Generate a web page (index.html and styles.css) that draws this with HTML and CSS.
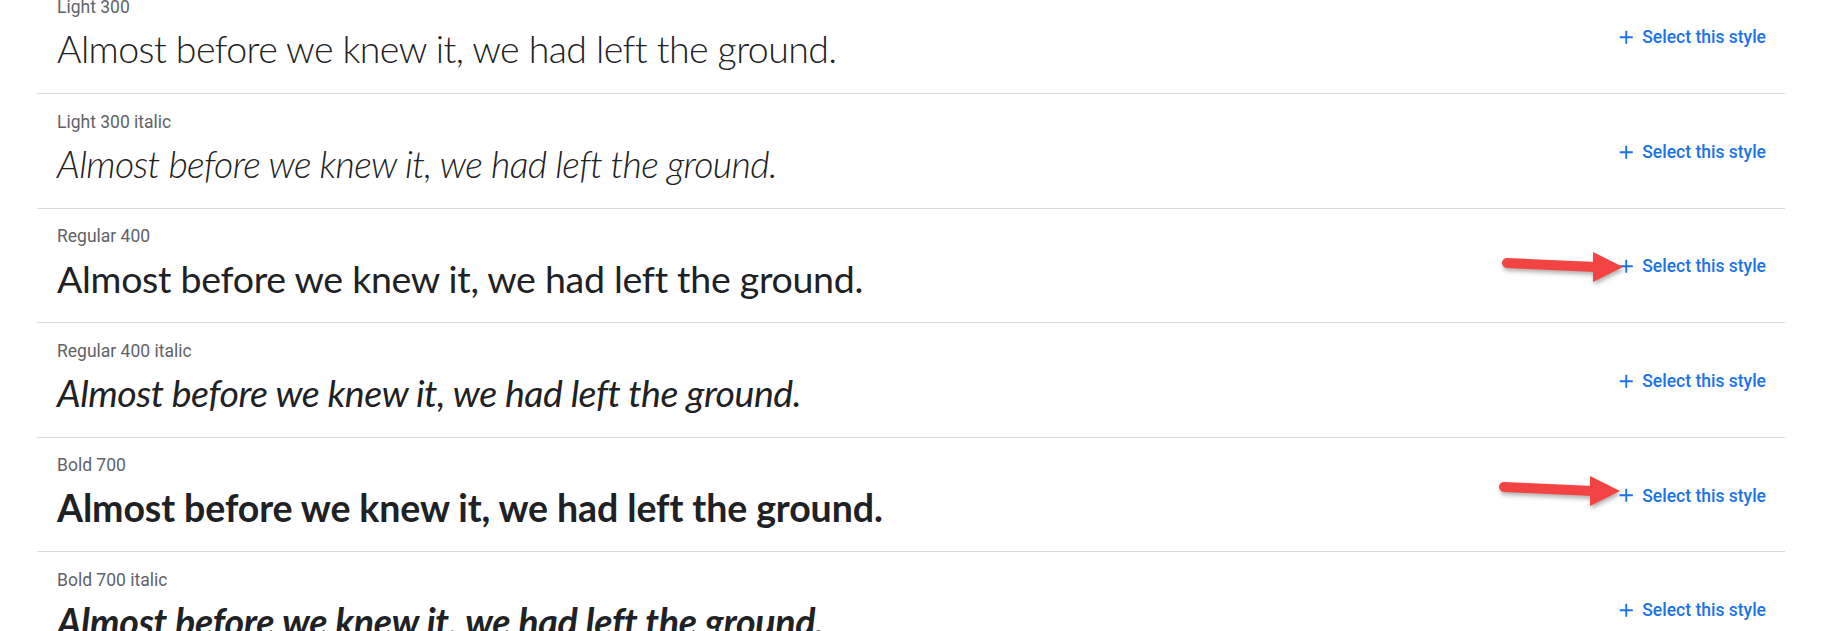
FILE: index.html
```html
<!doctype html>
<html lang="en">
	<head>
		<meta charset="UTF-8" />
		<meta name="viewport" content="width=device-width, initial-scale=1.0" />
		<title>Lato - Styles</title>
		<link rel="stylesheet" href="styles.css">
	</head>
	<body>
		<div class="style-list">
			<div class="style-row">
				<div class="style-info">
					<div class="style-name">Light 300</div>
					<div class="sample w300">Almost before we knew it, we had left the ground.</div>
				</div>
				<button class="select-btn">
					<svg class="plus" viewBox="0 0 24 24"><path d="M19 13h-6v6h-2v-6H5v-2h6V5h2v6h6v2z" /></svg>
					<span>Select this style</span>
				</button>
			</div>

			<div class="style-row">
				<div class="style-info">
					<div class="style-name">Light 300 italic</div>
					<div class="sample w300 italic">Almost before we knew it, we had left the ground.</div>
				</div>
				<button class="select-btn">
					<svg class="plus" viewBox="0 0 24 24"><path d="M19 13h-6v6h-2v-6H5v-2h6V5h2v6h6v2z" /></svg>
					<span>Select this style</span>
				</button>
			</div>

			<div class="style-row">
				<div class="style-info">
					<div class="style-name">Regular 400</div>
					<div class="sample w400">Almost before we knew it, we had left the ground.</div>
				</div>
				<button class="select-btn">
					<svg class="plus" viewBox="0 0 24 24"><path d="M19 13h-6v6h-2v-6H5v-2h6V5h2v6h6v2z" /></svg>
					<span>Select this style</span>
				</button>
				<!-- annotation arrow -->
				<svg class="callout callout-first" viewBox="0 0 135 40">
					<line x1="12" y1="15" x2="101" y2="19" />
					<polygon points="98,4 128,19 98,34" />
				</svg>
			</div>

			<div class="style-row">
				<div class="style-info">
					<div class="style-name">Regular 400 italic</div>
					<div class="sample w400 italic">Almost before we knew it, we had left the ground.</div>
				</div>
				<button class="select-btn">
					<svg class="plus" viewBox="0 0 24 24"><path d="M19 13h-6v6h-2v-6H5v-2h6V5h2v6h6v2z" /></svg>
					<span>Select this style</span>
				</button>
			</div>

			<div class="style-row">
				<div class="style-info">
					<div class="style-name">Bold 700</div>
					<div class="sample w700">Almost before we knew it, we had left the ground.</div>
				</div>
				<button class="select-btn">
					<svg class="plus" viewBox="0 0 24 24"><path d="M19 13h-6v6h-2v-6H5v-2h6V5h2v6h6v2z" /></svg>
					<span>Select this style</span>
				</button>
				<svg class="callout callout-second" viewBox="0 0 135 40">
					<line x1="12" y1="15" x2="101" y2="19" />
					<polygon points="98,4 128,19 98,34" />
				</svg>
			</div>

			<div class="style-row">
				<div class="style-info">
					<div class="style-name">Bold 700 italic</div>
					<div class="sample w700 italic">Almost before we knew it, we had left the ground.</div>
				</div>
				<button class="select-btn">
					<svg class="plus" viewBox="0 0 24 24"><path d="M19 13h-6v6h-2v-6H5v-2h6V5h2v6h6v2z" /></svg>
					<span>Select this style</span>
				</button>
			</div>
		</div>
	</body>
</html>
```

FILE: styles.css
```css
:root {
	--primary-color: #1a73e8;
	--text-color: #202124;
	--text-secondary: #5f6368;
	--border-color: #dadce0;
	--arrow-color: #f44343;
}

body {
	margin: 0;
	background-color: #fff;
	overflow: hidden;
	font-family: Roboto, 'Liberation Sans', Arial, sans-serif;
}

/* list is scrolled a little: first row starts above the viewport */
.style-list {
	margin: -20.6px 39px 0 37px;
}

.style-row {
	position: relative;
	display: flex;
	align-items: center;
	justify-content: space-between;
	padding: 15.5px 19px 21.6px 20px;
	border-bottom: 1px solid var(--border-color);
}

.style-info {
	min-width: 0;
}

.style-name {
	font-size: 17.5px;
	line-height: 25px;
	color: var(--text-secondary);
	margin-bottom: 6.5px;
}

.sample {
	font-family: Lato, 'Liberation Sans', sans-serif;
	font-size: 37.5px;
	line-height: 45px;
	color: var(--text-color);
	white-space: nowrap;
}

/* the local Lato runs a bit wider than the one on the page */
.w300 {
	font-weight: 300;
	letter-spacing: -0.57px;
}

.w300.italic {
	letter-spacing: -0.67px;
}

.w400 {
	font-weight: 400;
	letter-spacing: -0.29px;
}

.w400.italic {
	letter-spacing: -0.48px;
}

.w700 {
	font-weight: 700;
	letter-spacing: -0.1px;
}

.w700.italic {
	letter-spacing: -0.26px;
}

.italic {
	font-style: italic;
}

.select-btn {
	display: flex;
	align-items: center;
	gap: 5px;
	padding: 0;
	margin-top: 8px;
	border: none;
	background: none;
	font-family: Roboto, 'Liberation Sans', Arial, sans-serif;
	font-size: 17.5px;
	font-weight: 500;
	color: var(--primary-color);
	cursor: pointer;
}

.plus {
	width: 22.5px;
	height: 22.5px;
	fill: var(--primary-color);
}

/* red arrows drawn over the page */
.callout {
	position: absolute;
	width: 135px;
	height: 40px;
	filter: drop-shadow(1px 3px 2px rgba(0, 0, 0, 0.3));
}

.callout line {
	stroke: var(--arrow-color);
	stroke-width: 10;
	stroke-linecap: round;
}

.callout polygon {
	fill: var(--arrow-color);
}

.callout-first {
	left: 1458px;
	top: 39px;
}

.callout-second {
	left: 1455px;
	top: 34px;
}
```
